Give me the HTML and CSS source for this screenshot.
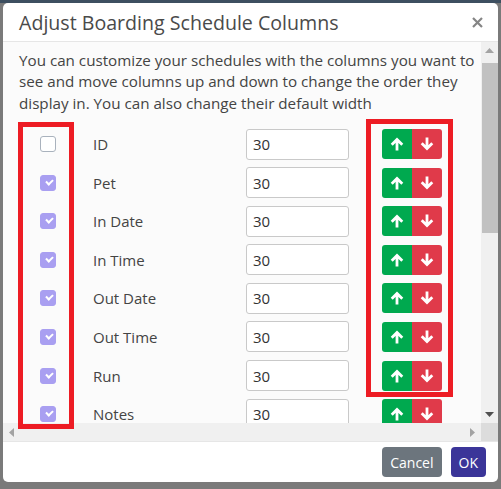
FILE: index.html
```html
<!DOCTYPE html>
<html lang="en">
<head>
    <meta charset="UTF-8">
    <meta name="viewport" content="width=device-width, initial-scale=1.0">
    <title>Adjust Boarding Schedule Columns</title>
    <link rel="stylesheet" href="styles.css">
</head>
<body>

<div class="backdrop-strip"></div>

<div class="modal">
    <div class="modal-header">
        <h2 class="modal-title">Adjust Boarding Schedule Columns</h2>
        <button type="button" class="close" aria-label="Close">
            <svg width="11" height="11" viewBox="0 0 11 11"><path d="M1 1L10 10M10 1L1 10" stroke="currentColor" stroke-width="2.2"/></svg>
        </button>
    </div>

    <div class="modal-body">
        <div class="body-main">
            <div class="viewport">
                <p class="intro">You can customize your schedules with the columns you want to see and move columns up and down to change the order they display in. You can also change their default width</p>

                <div class="columns">
                    <div class="col-row">
                        <label class="check"><input type="checkbox"><span class="box"></span></label>
                        <span class="col-name">ID</span>
                        <input class="col-width" type="text" value="30">
                        <div class="move">
                            <button type="button" class="up"><svg width="14" height="14" viewBox="0 0 13 13"><path d="M6.5 12.5V2.5M1.6 7.2L6.5 2.3L11.4 7.2" fill="none" stroke="#fff" stroke-width="2.6"/></svg></button>
                            <button type="button" class="down"><svg width="14" height="14" viewBox="0 0 13 13"><path d="M6.5 0.5V10.5M1.6 5.8L6.5 10.7L11.4 5.8" fill="none" stroke="#fff" stroke-width="2.6"/></svg></button>
                        </div>
                    </div>
                    <div class="col-row">
                        <label class="check"><input type="checkbox" checked><span class="box"></span></label>
                        <span class="col-name">Pet</span>
                        <input class="col-width" type="text" value="30">
                        <div class="move">
                            <button type="button" class="up"><svg width="14" height="14" viewBox="0 0 13 13"><path d="M6.5 12.5V2.5M1.6 7.2L6.5 2.3L11.4 7.2" fill="none" stroke="#fff" stroke-width="2.6"/></svg></button>
                            <button type="button" class="down"><svg width="14" height="14" viewBox="0 0 13 13"><path d="M6.5 0.5V10.5M1.6 5.8L6.5 10.7L11.4 5.8" fill="none" stroke="#fff" stroke-width="2.6"/></svg></button>
                        </div>
                    </div>
                    <div class="col-row">
                        <label class="check"><input type="checkbox" checked><span class="box"></span></label>
                        <span class="col-name">In Date</span>
                        <input class="col-width" type="text" value="30">
                        <div class="move">
                            <button type="button" class="up"><svg width="14" height="14" viewBox="0 0 13 13"><path d="M6.5 12.5V2.5M1.6 7.2L6.5 2.3L11.4 7.2" fill="none" stroke="#fff" stroke-width="2.6"/></svg></button>
                            <button type="button" class="down"><svg width="14" height="14" viewBox="0 0 13 13"><path d="M6.5 0.5V10.5M1.6 5.8L6.5 10.7L11.4 5.8" fill="none" stroke="#fff" stroke-width="2.6"/></svg></button>
                        </div>
                    </div>
                    <div class="col-row">
                        <label class="check"><input type="checkbox" checked><span class="box"></span></label>
                        <span class="col-name">In Time</span>
                        <input class="col-width" type="text" value="30">
                        <div class="move">
                            <button type="button" class="up"><svg width="14" height="14" viewBox="0 0 13 13"><path d="M6.5 12.5V2.5M1.6 7.2L6.5 2.3L11.4 7.2" fill="none" stroke="#fff" stroke-width="2.6"/></svg></button>
                            <button type="button" class="down"><svg width="14" height="14" viewBox="0 0 13 13"><path d="M6.5 0.5V10.5M1.6 5.8L6.5 10.7L11.4 5.8" fill="none" stroke="#fff" stroke-width="2.6"/></svg></button>
                        </div>
                    </div>
                    <div class="col-row">
                        <label class="check"><input type="checkbox" checked><span class="box"></span></label>
                        <span class="col-name">Out Date</span>
                        <input class="col-width" type="text" value="30">
                        <div class="move">
                            <button type="button" class="up"><svg width="14" height="14" viewBox="0 0 13 13"><path d="M6.5 12.5V2.5M1.6 7.2L6.5 2.3L11.4 7.2" fill="none" stroke="#fff" stroke-width="2.6"/></svg></button>
                            <button type="button" class="down"><svg width="14" height="14" viewBox="0 0 13 13"><path d="M6.5 0.5V10.5M1.6 5.8L6.5 10.7L11.4 5.8" fill="none" stroke="#fff" stroke-width="2.6"/></svg></button>
                        </div>
                    </div>
                    <div class="col-row">
                        <label class="check"><input type="checkbox" checked><span class="box"></span></label>
                        <span class="col-name">Out Time</span>
                        <input class="col-width" type="text" value="30">
                        <div class="move">
                            <button type="button" class="up"><svg width="14" height="14" viewBox="0 0 13 13"><path d="M6.5 12.5V2.5M1.6 7.2L6.5 2.3L11.4 7.2" fill="none" stroke="#fff" stroke-width="2.6"/></svg></button>
                            <button type="button" class="down"><svg width="14" height="14" viewBox="0 0 13 13"><path d="M6.5 0.5V10.5M1.6 5.8L6.5 10.7L11.4 5.8" fill="none" stroke="#fff" stroke-width="2.6"/></svg></button>
                        </div>
                    </div>
                    <div class="col-row">
                        <label class="check"><input type="checkbox" checked><span class="box"></span></label>
                        <span class="col-name">Run</span>
                        <input class="col-width" type="text" value="30">
                        <div class="move">
                            <button type="button" class="up"><svg width="14" height="14" viewBox="0 0 13 13"><path d="M6.5 12.5V2.5M1.6 7.2L6.5 2.3L11.4 7.2" fill="none" stroke="#fff" stroke-width="2.6"/></svg></button>
                            <button type="button" class="down"><svg width="14" height="14" viewBox="0 0 13 13"><path d="M6.5 0.5V10.5M1.6 5.8L6.5 10.7L11.4 5.8" fill="none" stroke="#fff" stroke-width="2.6"/></svg></button>
                        </div>
                    </div>
                    <div class="col-row">
                        <label class="check"><input type="checkbox" checked><span class="box"></span></label>
                        <span class="col-name">Notes</span>
                        <input class="col-width" type="text" value="30">
                        <div class="move">
                            <button type="button" class="up"><svg width="14" height="14" viewBox="0 0 13 13"><path d="M6.5 12.5V2.5M1.6 7.2L6.5 2.3L11.4 7.2" fill="none" stroke="#fff" stroke-width="2.6"/></svg></button>
                            <button type="button" class="down"><svg width="14" height="14" viewBox="0 0 13 13"><path d="M6.5 0.5V10.5M1.6 5.8L6.5 10.7L11.4 5.8" fill="none" stroke="#fff" stroke-width="2.6"/></svg></button>
                        </div>
                    </div>
                </div>
            </div>

            <div class="vscroll">
                <span class="sb-btn"><svg width="9" height="5" viewBox="0 0 9 5"><path d="M0 5h9L4.5 0z" fill="#a3a3a3"/></svg></span>
                <span class="sb-track"><span class="sb-thumb"></span></span>
                <span class="sb-btn"><svg width="9" height="5" viewBox="0 0 9 5"><path d="M0 0h9L4.5 5z" fill="#505050"/></svg></span>
            </div>
        </div>

        <div class="hscroll">
            <span class="sb-btn"><svg width="5" height="9" viewBox="0 0 5 9"><path d="M5 0v9L0 4.5z" fill="#a3a3a3"/></svg></span>
            <span class="sb-track"></span>
            <span class="sb-btn"><svg width="5" height="9" viewBox="0 0 5 9"><path d="M0 0v9L5 4.5z" fill="#a3a3a3"/></svg></span>
            <span class="sb-corner"></span>
        </div>
    </div>

    <div class="modal-footer">
        <button type="button" class="btn btn-cancel">Cancel</button>
        <button type="button" class="btn btn-ok">OK</button>
    </div>

    <!-- red highlight marks drawn over the dialog -->
    <div class="mark mark-checks"></div>
    <div class="mark mark-moves"></div>
</div>

</body>
</html>
```

FILE: styles.css
```css
body {
    margin: 0;
    background: #7a7a7a;
    font-family: "Open Sans", "Noto Sans", Arial, sans-serif;
    color: #444;
    overflow: hidden;
}
.backdrop-strip {
    height: 3px;
    background: #3d4f60; /* dimmed table header behind the overlay */
}
.modal {
    position: relative;
    width: 495px;
    height: 479px;
    margin: 0 0 0 3px;
    background: #fff;
    border-radius: 5px;
    overflow: hidden;
    display: flex;
    flex-direction: column;
}
.modal-header {
    height: 38px;
    display: flex;
    align-items: center;
    justify-content: space-between;
    padding: 0 15px 0 16px;
    border-bottom: 1px solid #e6e6e6;
    flex-shrink: 0;
}
.modal-title {
    margin: 0;
    font-size: 19.6px;
    font-weight: 400;
    color: #4a4a4a;
}
.close {
    border: none;
    background: none;
    padding: 0;
    color: #858585;
    display: flex;
    margin-top: 1px;
}
.modal-body {
    height: 399px;
    display: flex;
    flex-direction: column;
    flex-shrink: 0;
    background: #fbfbfb;
}
.body-main {
    flex: 1;
    min-height: 0;
    display: flex;
}
.viewport {
    flex: 1;
    overflow: hidden;
    padding: 8px 4px 0 16px;
}

/* scrollbars drawn like the classic windows ones */
.vscroll {
    width: 17px;
    display: flex;
    flex-direction: column;
    background: #f0f0f0;
}
.sb-btn {
    width: 17px;
    height: 17px;
    flex-shrink: 0;
    display: flex;
    align-items: center;
    justify-content: center;
}
.vscroll .sb-track {
    flex: 1;
    padding: 4px 0 0 1px;
}
.sb-thumb {
    display: block;
    height: 170px;
    background: #c1c1c1;
}
.hscroll {
    height: 18px;
    display: flex;
    background: #f0f0f0;
}
.hscroll .sb-btn {
    height: 18px;
}
.hscroll .sb-track {
    flex: 1;
}
.sb-corner {
    width: 17px;
    background: #dcdcdc;
}

.intro {
    margin: 0 0 11px;
    font-size: 15.2px;
    line-height: 21.3px;
}
.col-row {
    display: grid;
    grid-template-columns: 74px 153px 136px 60px;
    align-items: center;
    height: 38.57px;
}
.check {
    margin-left: 21px;
    display: flex;
}
.check input {
    display: none;
}
.check .box {
    width: 14px;
    height: 14px;
    border: 1px solid #a9b2bd;
    border-radius: 3px;
    background: #fff;
    position: relative;
}
.check input:checked + .box {
    background: #a99ff1;
    border-color: #a99ff1;
}
.check input:checked + .box::after {
    content: "";
    position: absolute;
    left: 4.5px;
    top: 3px;
    width: 5px;
    height: 3px;
    border-left: 2px solid #fff;
    border-bottom: 2px solid #fff;
    transform: rotate(-45deg);
}
.col-name {
    font-size: 15px;
}
.col-width {
    width: 103px;
    height: 31px;
    box-sizing: border-box;
    border: 1px solid #c9c9c9;
    border-radius: 3px;
    padding: 0 6px;
    font-family: inherit;
    font-size: 15px;
    color: #333;
    background: #fff;
}
.move {
    display: flex;
}
.move button {
    width: 30px;
    height: 30px;
    border: none;
    padding: 0;
    display: flex;
    align-items: center;
    justify-content: center;
}
.move .up {
    background: #00a94f;
    border-radius: 3px 0 0 3px;
}
.move .down {
    background: #e03a4a;
    border-radius: 0 3px 3px 0;
}
.modal-footer {
    flex: 1;
    border-top: 1px solid #e6e6e6;
    display: flex;
    justify-content: flex-end;
    align-items: flex-start;
    gap: 9px;
    padding: 5px 12px 0 0;
}
.btn {
    height: 30px;
    border: none;
    border-radius: 4px;
    color: #fff;
    font-family: inherit;
    font-size: 14px;
    padding: 0 8px;
}
.btn-cancel {
    background: #6c757d;
}
.btn-ok {
    background: #3b3599;
}
.mark {
    position: absolute;
    border: 5px solid #ed1c24;
    box-sizing: border-box;
}
.mark-checks {
    left: 15px;
    top: 119px;
    width: 56px;
    height: 307px;
}
.mark-moves {
    left: 363px;
    top: 116px;
    width: 87px;
    height: 278px;
}
```
